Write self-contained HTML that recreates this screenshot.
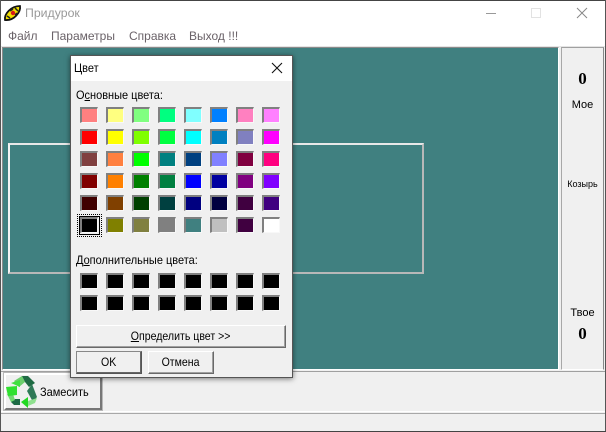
<!DOCTYPE html>
<html><head><meta charset="utf-8">
<style>
html,body{margin:0;padding:0;background:#fff}
#r{position:relative;width:606px;height:432px;overflow:hidden;background:#f0f0f0;font-family:"Liberation Sans",sans-serif;font-size:12px;color:#000}
#r div{position:absolute;box-sizing:border-box}
.t{white-space:nowrap;line-height:14px}
.n{transform:scaleX(.915);transform-origin:0 0}
.s{width:18px;height:16px;border-style:solid;border-width:2px 1px 1px 2px;border-color:#808080 #f8f8f8 #f8f8f8 #808080}
.b{background:#f0f0f0;border:1px solid;border-color:#fff #696969 #696969 #fff;box-shadow:inset -1px -1px 0 #a0a0a0;text-align:center;line-height:20px;font-size:12px}
.b span{display:inline-block;transform:scaleX(.88)}
u{text-decoration:underline}
</style></head><body><div id="r">
<div style="left:0;top:0;width:606px;height:46px;background:#fff"></div>
<div style="left:0;top:0;width:606px;height:1px;background:#444"></div>
<div style="left:0;top:0;width:1px;height:432px;background:#555"></div>
<div style="left:605px;top:0;width:1px;height:432px;background:#555"></div>
<div style="left:0;top:431px;width:606px;height:1px;background:#444"></div>

<svg style="position:absolute;left:3px;top:3px" width="20" height="20" viewBox="0 0 20 20">
<path d="M2 17 C1 11 8 3 17 3 C18 9 11 18 2 17Z" fill="#f2e000" stroke="#111" stroke-width="1.8"/>
<path d="M4 13 L7 15 M7 8 L10 6 M12 5 L15 8 M12 12 L14 10" stroke="#222" stroke-width="1.5"/>
<circle cx="10" cy="10" r="2.2" fill="#d81818"/>
</svg>
<div class="t" style="left:25px;top:6px;font-size:12.3px;color:#999">Придурок</div>
<div class="t" style="left:8px;top:29px;color:#6a6268">Файл</div>
<div class="t" style="left:51px;top:29px;color:#6a6268">Параметры</div>
<div class="t" style="left:129px;top:29px;color:#6a6268">Справка</div>
<div class="t" style="left:189px;top:29px;color:#6a6268">Выход !!!</div>
<div style="left:486px;top:13px;width:10px;height:1px;background:#999"></div>
<div style="left:531px;top:8px;width:10px;height:10px;border:1px solid #e2e2e2"></div>
<svg style="position:absolute;left:576px;top:7px" width="12" height="12" viewBox="0 0 12 12"><path d="M1 1L11 11M11 1L1 11" stroke="#888" stroke-width="1"/></svg>

<!-- table -->
<div style="left:1px;top:46px;width:604px;height:1px;background:#e4e4e4"></div>
<div style="left:2px;top:47px;width:557px;height:323px;background:#408080;border-top:1px solid #8a8a8a;border-left:1px solid #8a8a8a;border-bottom:1px solid #fff;border-right:1px solid #fff"></div>
<div style="left:8px;top:143px;width:416px;height:131px;border:2px solid;border-color:#e8e8e8 #b8b8b8 #b8b8b8 #f4f4f4"></div>

<!-- side panel -->
<div style="left:561px;top:47px;width:43px;height:323px;background:#f0f0f0;border:1px solid;border-color:#a0a0a0 #888 #fff #a8a8a8"></div>
<div class="t" style="left:562px;top:69px;width:41px;text-align:center;font:bold 17px/19px 'Liberation Serif',serif">0</div>
<div class="t" style="left:562px;top:98px;width:41px;text-align:center;font-size:11px">Мое</div>
<div class="t" style="left:562px;top:177px;width:41px;text-align:center;font-size:9px;color:#000">Козырь</div>
<div class="t" style="left:562px;top:306px;width:41px;text-align:center;font-size:11px">Твое</div>
<div class="t" style="left:562px;top:324px;width:41px;text-align:center;font:bold 17px/19px 'Liberation Serif',serif">0</div>

<!-- bottom -->
<div style="left:1px;top:371px;width:604px;height:1px;background:#a0a0a0"></div>
<div style="left:1px;top:372px;width:604px;height:40px;background:#f0f0f0;border-bottom:1px solid #fff"></div>
<div style="left:1px;top:413px;width:604px;height:1px;background:#a8a8a8"></div>
<div style="left:4px;top:373px;width:98px;height:37px;background:#f0f0f0;border:2px solid;border-color:#fff #777 #777 #fff;outline:1px solid #b8b8b8"></div>
<svg style="position:absolute;left:0;top:372px" width="40" height="40" viewBox="0 0 40 40">
<path d="M14 9 L22 4 L25 10 L19 15Z" fill="#6ccf6c"/>
<path d="M22 4 L28 4 L35 11 L29 15 L25 10Z" fill="#1f6b44"/>
<path d="M32 12 L37 25 L33 30 L27 19Z" fill="#2f7a57"/>
<path d="M28 29 L37 26 L35 31 L28 34Z" fill="#8fe08f"/>
<path d="M21 30 L28 25 L28 36Z" fill="#22d822"/>
<path d="M12 27 L20 27 L20 33 L14 33 L11 30Z" fill="#1d6a45"/>
<path d="M7 22 L13 22 L15 28 L11 30Z" fill="#70d870"/>
<path d="M6 15 L17 14 L17 23 L8 24Z" fill="#30e030"/>
<path d="M11 11 L20 8 L20 15Z" fill="#40e040"/>
</svg>
<div class="t n" style="left:40px;top:385px">Замесить</div>

<!-- dialog -->
<div style="left:70px;top:55px;width:223px;height:323px;background:#f0f0f0;border:1px solid #555;box-shadow:0 1px 5px rgba(0,0,0,.5)"></div>
<div style="left:71px;top:56px;width:221px;height:25px;background:#fff"></div>
<div class="t n" style="left:74px;top:61px">Цвет</div>
<svg style="position:absolute;left:271px;top:62px" width="12" height="12" viewBox="0 0 12 12"><path d="M1 1L11 11M11 1L1 11" stroke="#111" stroke-width="1.1"/></svg>
<div class="t n" style="left:76px;top:88px">О<u>с</u>новные цвета:</div>

<div class="s" style="left:80px;top:107px;background:#ff8080"></div><div class="s" style="left:106px;top:107px;background:#ffff80"></div><div class="s" style="left:132px;top:107px;background:#80ff80"></div><div class="s" style="left:158px;top:107px;background:#00ff80"></div><div class="s" style="left:184px;top:107px;background:#80ffff"></div><div class="s" style="left:210px;top:107px;background:#0080ff"></div><div class="s" style="left:236px;top:107px;background:#ff80c0"></div><div class="s" style="left:262px;top:107px;background:#ff80ff"></div>
<div class="s" style="left:80px;top:129px;background:#ff0000"></div><div class="s" style="left:106px;top:129px;background:#ffff00"></div><div class="s" style="left:132px;top:129px;background:#80ff00"></div><div class="s" style="left:158px;top:129px;background:#00ff40"></div><div class="s" style="left:184px;top:129px;background:#00ffff"></div><div class="s" style="left:210px;top:129px;background:#0080c0"></div><div class="s" style="left:236px;top:129px;background:#8080c0"></div><div class="s" style="left:262px;top:129px;background:#ff00ff"></div>
<div class="s" style="left:80px;top:151px;background:#804040"></div><div class="s" style="left:106px;top:151px;background:#ff8040"></div><div class="s" style="left:132px;top:151px;background:#00ff00"></div><div class="s" style="left:158px;top:151px;background:#008080"></div><div class="s" style="left:184px;top:151px;background:#004080"></div><div class="s" style="left:210px;top:151px;background:#8080ff"></div><div class="s" style="left:236px;top:151px;background:#800040"></div><div class="s" style="left:262px;top:151px;background:#ff0080"></div>
<div class="s" style="left:80px;top:173px;background:#800000"></div><div class="s" style="left:106px;top:173px;background:#ff8000"></div><div class="s" style="left:132px;top:173px;background:#008000"></div><div class="s" style="left:158px;top:173px;background:#008040"></div><div class="s" style="left:184px;top:173px;background:#0000ff"></div><div class="s" style="left:210px;top:173px;background:#0000a0"></div><div class="s" style="left:236px;top:173px;background:#800080"></div><div class="s" style="left:262px;top:173px;background:#8000ff"></div>
<div class="s" style="left:80px;top:195px;background:#400000"></div><div class="s" style="left:106px;top:195px;background:#804000"></div><div class="s" style="left:132px;top:195px;background:#004000"></div><div class="s" style="left:158px;top:195px;background:#004040"></div><div class="s" style="left:184px;top:195px;background:#000080"></div><div class="s" style="left:210px;top:195px;background:#000040"></div><div class="s" style="left:236px;top:195px;background:#400040"></div><div class="s" style="left:262px;top:195px;background:#400080"></div>
<div style="left:77px;top:214px;width:25px;height:23px;border:1px dotted #000"></div>
<div style="left:79px;top:216px;width:21px;height:19px;border:1px solid #000"></div>
<div class="s" style="left:80px;top:217px;background:#000"></div><div class="s" style="left:106px;top:217px;background:#808000"></div><div class="s" style="left:132px;top:217px;background:#808040"></div><div class="s" style="left:158px;top:217px;background:#808080"></div><div class="s" style="left:184px;top:217px;background:#408080"></div><div class="s" style="left:210px;top:217px;background:#c0c0c0"></div><div class="s" style="left:236px;top:217px;background:#400040"></div><div class="s" style="left:262px;top:217px;background:#fff"></div>

<div class="t n" style="left:76px;top:253px">Д<u>о</u>полнительные цвета:</div>
<div class="s" style="left:80px;top:273px;background:#000"></div><div class="s" style="left:106px;top:273px;background:#000"></div><div class="s" style="left:132px;top:273px;background:#000"></div><div class="s" style="left:158px;top:273px;background:#000"></div><div class="s" style="left:184px;top:273px;background:#000"></div><div class="s" style="left:210px;top:273px;background:#000"></div><div class="s" style="left:236px;top:273px;background:#000"></div><div class="s" style="left:262px;top:273px;background:#000"></div>
<div class="s" style="left:80px;top:295px;background:#000"></div><div class="s" style="left:106px;top:295px;background:#000"></div><div class="s" style="left:132px;top:295px;background:#000"></div><div class="s" style="left:158px;top:295px;background:#000"></div><div class="s" style="left:184px;top:295px;background:#000"></div><div class="s" style="left:210px;top:295px;background:#000"></div><div class="s" style="left:236px;top:295px;background:#000"></div><div class="s" style="left:262px;top:295px;background:#000"></div>

<div class="b" style="left:76px;top:325px;width:210px;height:23px"><span><u>О</u>пределить цвет &gt;&gt;</span></div>
<div class="b" style="left:76px;top:351px;width:66px;height:23px;border:1px solid;border-color:#888 #555 #555 #888;box-shadow:inset -1px -1px 0 #666"><span>OK</span></div>
<div class="b" style="left:148px;top:351px;width:66px;height:23px"><span>Отмена</span></div>
</div></body></html>
